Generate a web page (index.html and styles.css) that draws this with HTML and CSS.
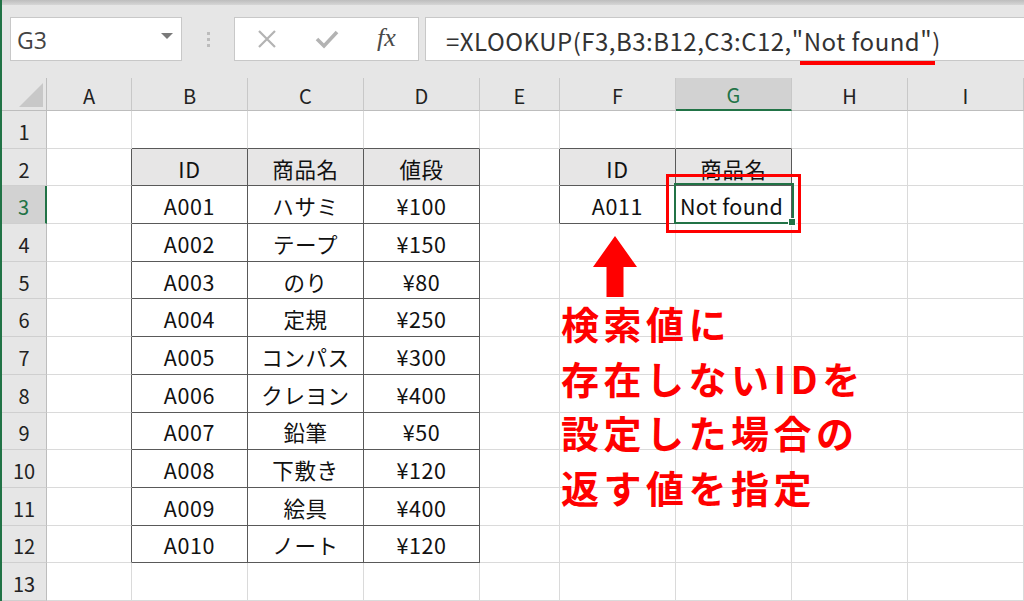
FILE: index.html
```html
<!DOCTYPE html>
<html lang="ja">
<head>
<meta charset="utf-8">
<link rel="stylesheet" href="styles.css">
</head>
<body>
<div class="app">
  <div class="topstrip"></div>
  <div class="fbar">
    <div class="namebox"><span class="nb-text">G3</span><span class="nb-caret"></span></div>
    <div class="dots"><i></i><i></i><i></i></div>
    <div class="btns">
      <svg class="ico" width="22" height="22" viewBox="0 0 22 22"><path d="M3 3 L19 19 M19 3 L3 19" stroke="#b3b3b3" stroke-width="2.2" fill="none"/></svg>
      <svg class="ico" width="26" height="22" viewBox="0 0 26 22"><path d="M3 11 L10 18 L23 4" stroke="#b3b3b3" stroke-width="3.6" fill="none"/></svg>
      <span class="fx">fx</span>
    </div>
    <div class="formula"><span class="ftext">=XLOOKUP(F3,B3:B12,C3:C12,<span class="uline">"Not found"</span>)</span></div>
  </div>
  <div class="sheet">
    <div class="corner"><span class="tri"></span></div>
    <div class="ch">A</div><div class="ch">B</div><div class="ch">C</div><div class="ch">D</div><div class="ch">E</div><div class="ch">F</div><div class="ch sel">G</div><div class="ch">H</div><div class="ch">I</div>

    <div class="rh">1</div>
    <div class="c"></div><div class="c eb"></div><div class="c eb"></div><div class="c eb"></div><div class="c"></div><div class="c eb"></div><div class="c eb"></div><div class="c"></div><div class="c"></div>

    <div class="rh">2</div>
    <div class="c er"></div><div class="c t th">ID</div><div class="c t th">商品名</div><div class="c t th">値段</div><div class="c er"></div><div class="c t th">ID</div><div class="c t th">商品名</div><div class="c"></div><div class="c"></div>

    <div class="rh sel">3</div>
    <div class="c er"></div><div class="c t">A001</div><div class="c t">ハサミ</div><div class="c t">¥100</div><div class="c er"></div><div class="c t">A011</div>
    <div class="c t g3"><span class="g3text">Not found</span><span class="redbox"></span><span class="selbox"><span class="handle"></span></span></div>
    <div class="c"></div><div class="c"></div>

    <div class="rh">4</div>
    <div class="c er"></div><div class="c t">A002</div><div class="c t">テープ</div><div class="c t">¥150</div><div class="c"></div><div class="c"></div><div class="c"></div><div class="c"></div><div class="c"></div>

    <div class="rh">5</div>
    <div class="c er"></div><div class="c t">A003</div><div class="c t">のり</div><div class="c t">¥80</div><div class="c"></div><div class="c"></div><div class="c"></div><div class="c"></div><div class="c"></div>

    <div class="rh">6</div>
    <div class="c er"></div><div class="c t">A004</div><div class="c t">定規</div><div class="c t">¥250</div><div class="c"></div><div class="c"></div><div class="c"></div><div class="c"></div><div class="c"></div>

    <div class="rh">7</div>
    <div class="c er"></div><div class="c t">A005</div><div class="c t">コンパス</div><div class="c t">¥300</div><div class="c"></div><div class="c"></div><div class="c"></div><div class="c"></div><div class="c"></div>

    <div class="rh">8</div>
    <div class="c er"></div><div class="c t">A006</div><div class="c t">クレヨン</div><div class="c t">¥400</div><div class="c"></div><div class="c"></div><div class="c"></div><div class="c"></div><div class="c"></div>

    <div class="rh">9</div>
    <div class="c er"></div><div class="c t">A007</div><div class="c t">鉛筆</div><div class="c t">¥50</div><div class="c"></div><div class="c"></div><div class="c"></div><div class="c"></div><div class="c"></div>

    <div class="rh">10</div>
    <div class="c er"></div><div class="c t">A008</div><div class="c t">下敷き</div><div class="c t">¥120</div><div class="c"></div><div class="c"></div><div class="c"></div><div class="c"></div><div class="c"></div>

    <div class="rh">11</div>
    <div class="c er"></div><div class="c t">A009</div><div class="c t">絵具</div><div class="c t">¥400</div><div class="c"></div><div class="c"></div><div class="c"></div><div class="c"></div><div class="c"></div>

    <div class="rh">12</div>
    <div class="c er"></div><div class="c t">A010</div><div class="c t">ノート</div><div class="c t">¥120</div><div class="c"></div><div class="c"></div><div class="c"></div><div class="c"></div><div class="c"></div>

    <div class="rh">13</div>
    <div class="c"></div><div class="c"></div><div class="c"></div><div class="c"></div><div class="c"></div><div class="c"></div><div class="c"></div><div class="c"></div><div class="c"></div>

    <svg class="arrow" width="46" height="62" viewBox="0 0 46 62"><polygon points="23,0 45,31 31.5,31 31.5,61 14.5,61 14.5,31 1,31" fill="#ff0000"/></svg>
    <div class="note">検索値に<br>存在しないIDを<br>設定した場合の<br>返す値を指定</div>
  </div>
</div>
</body>
</html>
```

FILE: styles.css
```css
html, body {
  margin: 0;
  padding: 0;
  background: #e6e6e6;
}
body {
  width: 1024px;
  height: 601px;
  overflow: hidden;
  font-family: "Noto Sans CJK JP", "Noto Sans", sans-serif;
}
.app {
  position: relative;
  width: 1024px;
  height: 601px;
  border-left: 2px solid #217346;
  box-sizing: border-box;
  background: #e6e6e6;
}
.topstrip {
  height: 5px;
  background: linear-gradient(#bdbdbd, #d6d6d6);
}
.fbar {
  display: flex;
  align-items: stretch;
  height: 44px;
  margin-top: 12px;
  padding-left: 8px;
}
.namebox {
  width: 172px;
  box-sizing: border-box;
  background: #fff;
  border: 1px solid #c8c8c8;
  display: flex;
  align-items: center;
  justify-content: space-between;
  padding: 0 8px 0 6px;
}
.nb-text {
  font-family: "Open Sans", "Noto Sans", sans-serif;
  font-size: 23px;
  color: #444;
  margin-top: 2px;
}
.nb-caret {
  width: 0;
  height: 0;
  border-left: 6px solid transparent;
  border-right: 6px solid transparent;
  border-top: 6px solid #7a7a7a;
  margin-bottom: 6px;
}
.dots {
  width: 52px;
  display: flex;
  flex-direction: column;
  align-items: center;
  justify-content: center;
  gap: 3px;
}
.dots i {
  display: block;
  width: 3px;
  height: 3px;
  background: #bcbcbc;
}
.btns {
  width: 185px;
  box-sizing: border-box;
  background: #fff;
  border: 1px solid #c8c8c8;
  display: flex;
  align-items: center;
  padding-left: 21px;
}
.btns .ico:first-child { margin-right: 36px; }
.btns .ico:nth-child(2) { margin-right: 37px; }
.fx {
  font-family: "Liberation Serif", serif;
  font-style: italic;
  font-size: 26px;
  color: #4a4a4a;
  margin-top: -3px;
}
.formula {
  flex: 1;
  margin-left: 6px;
  background: #fff;
  border: 1px solid #c8c8c8;
  border-right: none;
  display: flex;
  align-items: center;
  padding-left: 20px;
  position: relative;
}
.ftext {
  font-family: "Noto Sans CJK JP", sans-serif;
  font-size: 24px;
  color: #333;
  letter-spacing: 0.5px;
  margin-top: 2px;
}
.uline {
  position: relative;
}
.uline::after {
  content: "";
  position: absolute;
  left: 8px;
  right: -3px;
  bottom: -7px;
  height: 4px;
  background: #ff0000;
}
.sheet {
  position: relative;
  margin-top: 17px;
  display: grid;
  grid-template-columns: 45px 85px 116px 116px 116px 80px 116px 116px 116px 116px;
  grid-template-rows: 33px repeat(13, 37.7px);
  background: #fff;
}
.corner {
  background: #e6e6e6;
  border-right: 1px solid #bdbdbd;
  border-bottom: 1px solid #bdbdbd;
  position: relative;
}
.tri {
  position: absolute;
  right: 3px;
  bottom: 3px;
  width: 0;
  height: 0;
  border-left: 24px solid transparent;
  border-bottom: 24px solid #c8c8c8;
}
.ch {
  background: #e6e6e6;
  border-right: 1px solid #c8c8c8;
  border-bottom: 1px solid #bdbdbd;
  display: flex;
  align-items: center;
  justify-content: center;
  font-size: 20px;
  color: #222;
  padding-top: 2px;
  box-sizing: border-box;
}
.ch.sel {
  background: #d2d2d2;
  color: #217346;
  border-bottom: 2px solid #217346;
}
.rh {
  background: #e6e6e6;
  border-right: 1px solid #bdbdbd;
  border-bottom: 1px solid #cfcfcf;
  display: flex;
  align-items: center;
  justify-content: center;
  font-size: 20px;
  color: #222;
  padding-top: 4px;
  box-sizing: border-box;
}
.rh.sel {
  background: #d2d2d2;
  color: #217346;
  border-right: 2px solid #217346;
}
.c {
  border-right: 1px solid #dadada;
  border-bottom: 1px solid #dadada;
  box-sizing: border-box;
  display: flex;
  align-items: center;
  justify-content: center;
  font-size: 21.5px;
  letter-spacing: 0.6px;
  color: #111;
  padding-top: 2px;
}
.c.t {
  border-right-color: #595959;
  border-bottom-color: #595959;
}
.c.th {
  background: #e7e6e6;
}
.c.er { border-right-color: #595959; }
.c.eb { border-bottom-color: #595959; }
.g3 {
  position: relative;
  justify-content: flex-start;
  padding-left: 4px;
  letter-spacing: 0.3px;
}
.redbox {
  position: absolute;
  left: -10px;
  top: -12px;
  width: 135px;
  height: 59px;
  border: 3.5px solid #ff0000;
  box-sizing: border-box;
}
.selbox {
  position: absolute;
  left: -2px;
  top: -3px;
  width: 120px;
  height: 41px;
  border: 2px solid #217346;
  box-sizing: border-box;
}
.handle {
  position: absolute;
  right: -4px;
  bottom: -4px;
  width: 6px;
  height: 6px;
  background: #217346;
  border: 1px solid #fff;
}
.arrow {
  position: absolute;
  left: 590px;
  top: 158px;
}
.note {
  position: absolute;
  left: 559px;
  top: 218px;
  color: #ff0000;
  font-weight: 700;
  font-size: 38px;
  line-height: 54.5px;
  letter-spacing: 4.5px;
  white-space: nowrap;
}
```
